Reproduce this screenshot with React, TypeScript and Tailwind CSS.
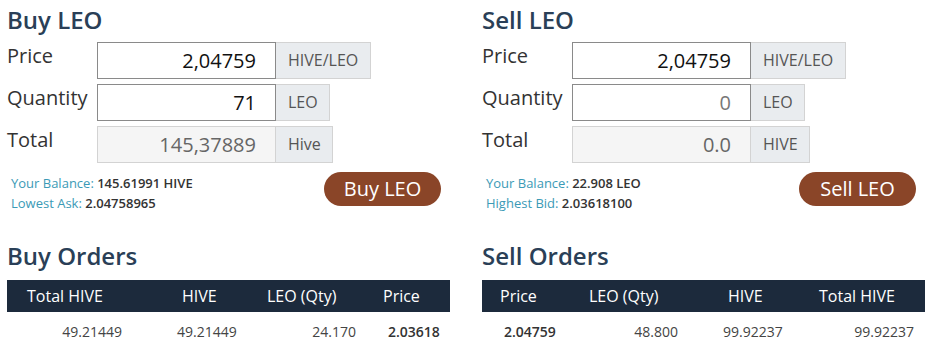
const font = { fontFamily: '"Open Sans", "Liberation Sans", sans-serif' };

type Field = { label: string; value: string; unit: string; unitW: string; disabled?: boolean; muted?: boolean };

function OrderForm({ title, fields, info, button }: {
    title: string;
    fields: Field[];
    info: [string, string][];
    button: string;
}) {
    return (
        <div className="w-[443px]">
            <h2 className="mt-[4px] h-[32px] text-[24px] leading-[32px] font-semibold text-[#2a3f57]">{title}</h2>
            <div className="mt-[6px] flex flex-col gap-[5px]">
                {fields.map(f => (
                    <div key={f.label} className="flex h-[37px]">
                        <div className="w-[90px] pt-[2px] text-[20px] leading-6 text-[#333]">{f.label}</div>
                        <div
                            className={`w-[179px] border pr-[19px] text-right text-[20px] leading-[35px] ${
                                f.disabled
                                    ? 'border-[#d3d3d3] bg-[#f5f5f5] text-[#666]'
                                    : 'border-[#8a8a8a] bg-white ' + (f.muted ? 'text-[#777]' : 'text-[#111]')
                            }`}
                        >
                            {f.value}
                        </div>
                        <div className={`${f.unitW} border border-l-0 border-[#d3d3d3] bg-[#e9ecef] px-3 text-[16px] leading-[35px] text-[#555]`}>
                            {f.unit}
                        </div>
                    </div>
                ))}
            </div>
            <div className="mt-[8px] flex items-start justify-between pl-[4px] pr-[9px]">
                <div className="pt-[2px] text-[13px] leading-5">
                    {info.map(([k, v]) => (
                        <div key={k}>
                            <span className="text-[#3b9ab6]">{k}</span>{' '}
                            <span className="font-semibold text-[#333]">{v}</span>
                        </div>
                    ))}
                </div>
                <button className="mt-[1px] h-[34px] w-[117px] rounded-full bg-[#8a4528] text-[20px] text-white">
                    {button}
                </button>
            </div>
        </div>
    );
}

type Col = { w: string; head: string; cell: string };

function OrderTable({ title, cols, heads, row, bold }: {
    title: string;
    cols: Col[];
    heads: string[];
    row: string[];
    bold: number;
}) {
    return (
        <div className="w-[443px]">
            <h2 className="h-[32px] text-[24px] leading-[32px] font-semibold text-[#2a3f57]">{title}</h2>
            <div className="mt-[8px] flex h-[32px] items-center bg-[#1c2a3c] text-[16px] text-white">
                {heads.map((h, i) => (
                    <div key={h} className={`${cols[i].w} ${cols[i].head}`}>{h}</div>
                ))}
            </div>
            <div className="flex h-[38px] items-center text-[14px] text-[#444]">
                {row.map((c, i) => (
                    <div key={i} className={`${cols[i].w} ${cols[i].cell} ${i === bold ? 'font-semibold text-[#333]' : ''}`}>{c}</div>
                ))}
            </div>
        </div>
    );
}

export default function App() {
    return (
        <div className="h-[343px] w-[946px] overflow-hidden bg-white" style={font}>
            <div className="flex gap-[32px] pl-[7px]">
                <OrderForm
                    title="Buy LEO"
                    fields={[
                        { label: 'Price', value: '2,04759', unit: 'HIVE/LEO', unitW: 'w-[95px]' },
                        { label: 'Quantity', value: '71', unit: 'LEO', unitW: 'w-[54px]' },
                        { label: 'Total', value: '145,37889', unit: 'Hive', unitW: 'w-[57px]', disabled: true },
                    ]}
                    info={[['Your Balance:', '145.61991 HIVE'], ['Lowest Ask:', '2.04758965']]}
                    button="Buy LEO"
                />
                <OrderForm
                    title="Sell LEO"
                    fields={[
                        { label: 'Price', value: '2,04759', unit: 'HIVE/LEO', unitW: 'w-[95px]' },
                        { label: 'Quantity', value: '0', unit: 'LEO', unitW: 'w-[54px]', muted: true },
                        { label: 'Total', value: '0.0', unit: 'HIVE', unitW: 'w-[59px]', disabled: true },
                    ]}
                    info={[['Your Balance:', '22.908 LEO'], ['Highest Bid:', '2.03618100']]}
                    button="Sell LEO"
                />
            </div>
            <div className="mt-[27px] flex gap-[32px] pl-[7px]">
                <OrderTable
                    title="Buy Orders"
                    heads={['Total HIVE', 'HIVE', 'LEO (Qty)', 'Price']}
                    row={['49.21449', '49.21449', '24.170', '2.03618']}
                    bold={3}
                    cols={[
                        { w: 'w-[153px]', head: 'pl-[20px]', cell: 'pr-[38px] text-right' },
                        { w: 'w-[90px]', head: 'pl-[22px]', cell: 'pl-[17px]' },
                        { w: 'w-[120px]', head: 'pl-[17px]', cell: 'pr-[14px] text-right' },
                        { w: 'w-[80px]', head: 'pl-[13px]', cell: 'pl-[18px]' },
                    ]}
                />
                <OrderTable
                    title="Sell Orders"
                    heads={['Price', 'LEO (Qty)', 'HIVE', 'Total HIVE']}
                    row={['2.04759', '48.800', '99.92237', '99.92237']}
                    bold={0}
                    cols={[
                        { w: 'w-[88px]', head: 'pl-[18px]', cell: 'pl-[22px]' },
                        { w: 'w-[130px]', head: 'pl-[19px]', cell: 'pr-[22px] text-right' },
                        { w: 'w-[100px]', head: 'pl-[28px]', cell: 'pl-[23px]' },
                        { w: 'w-[125px]', head: 'pl-[19px]', cell: 'pr-[11px] text-right' },
                    ]}
                />
            </div>
        </div>
    );
}
